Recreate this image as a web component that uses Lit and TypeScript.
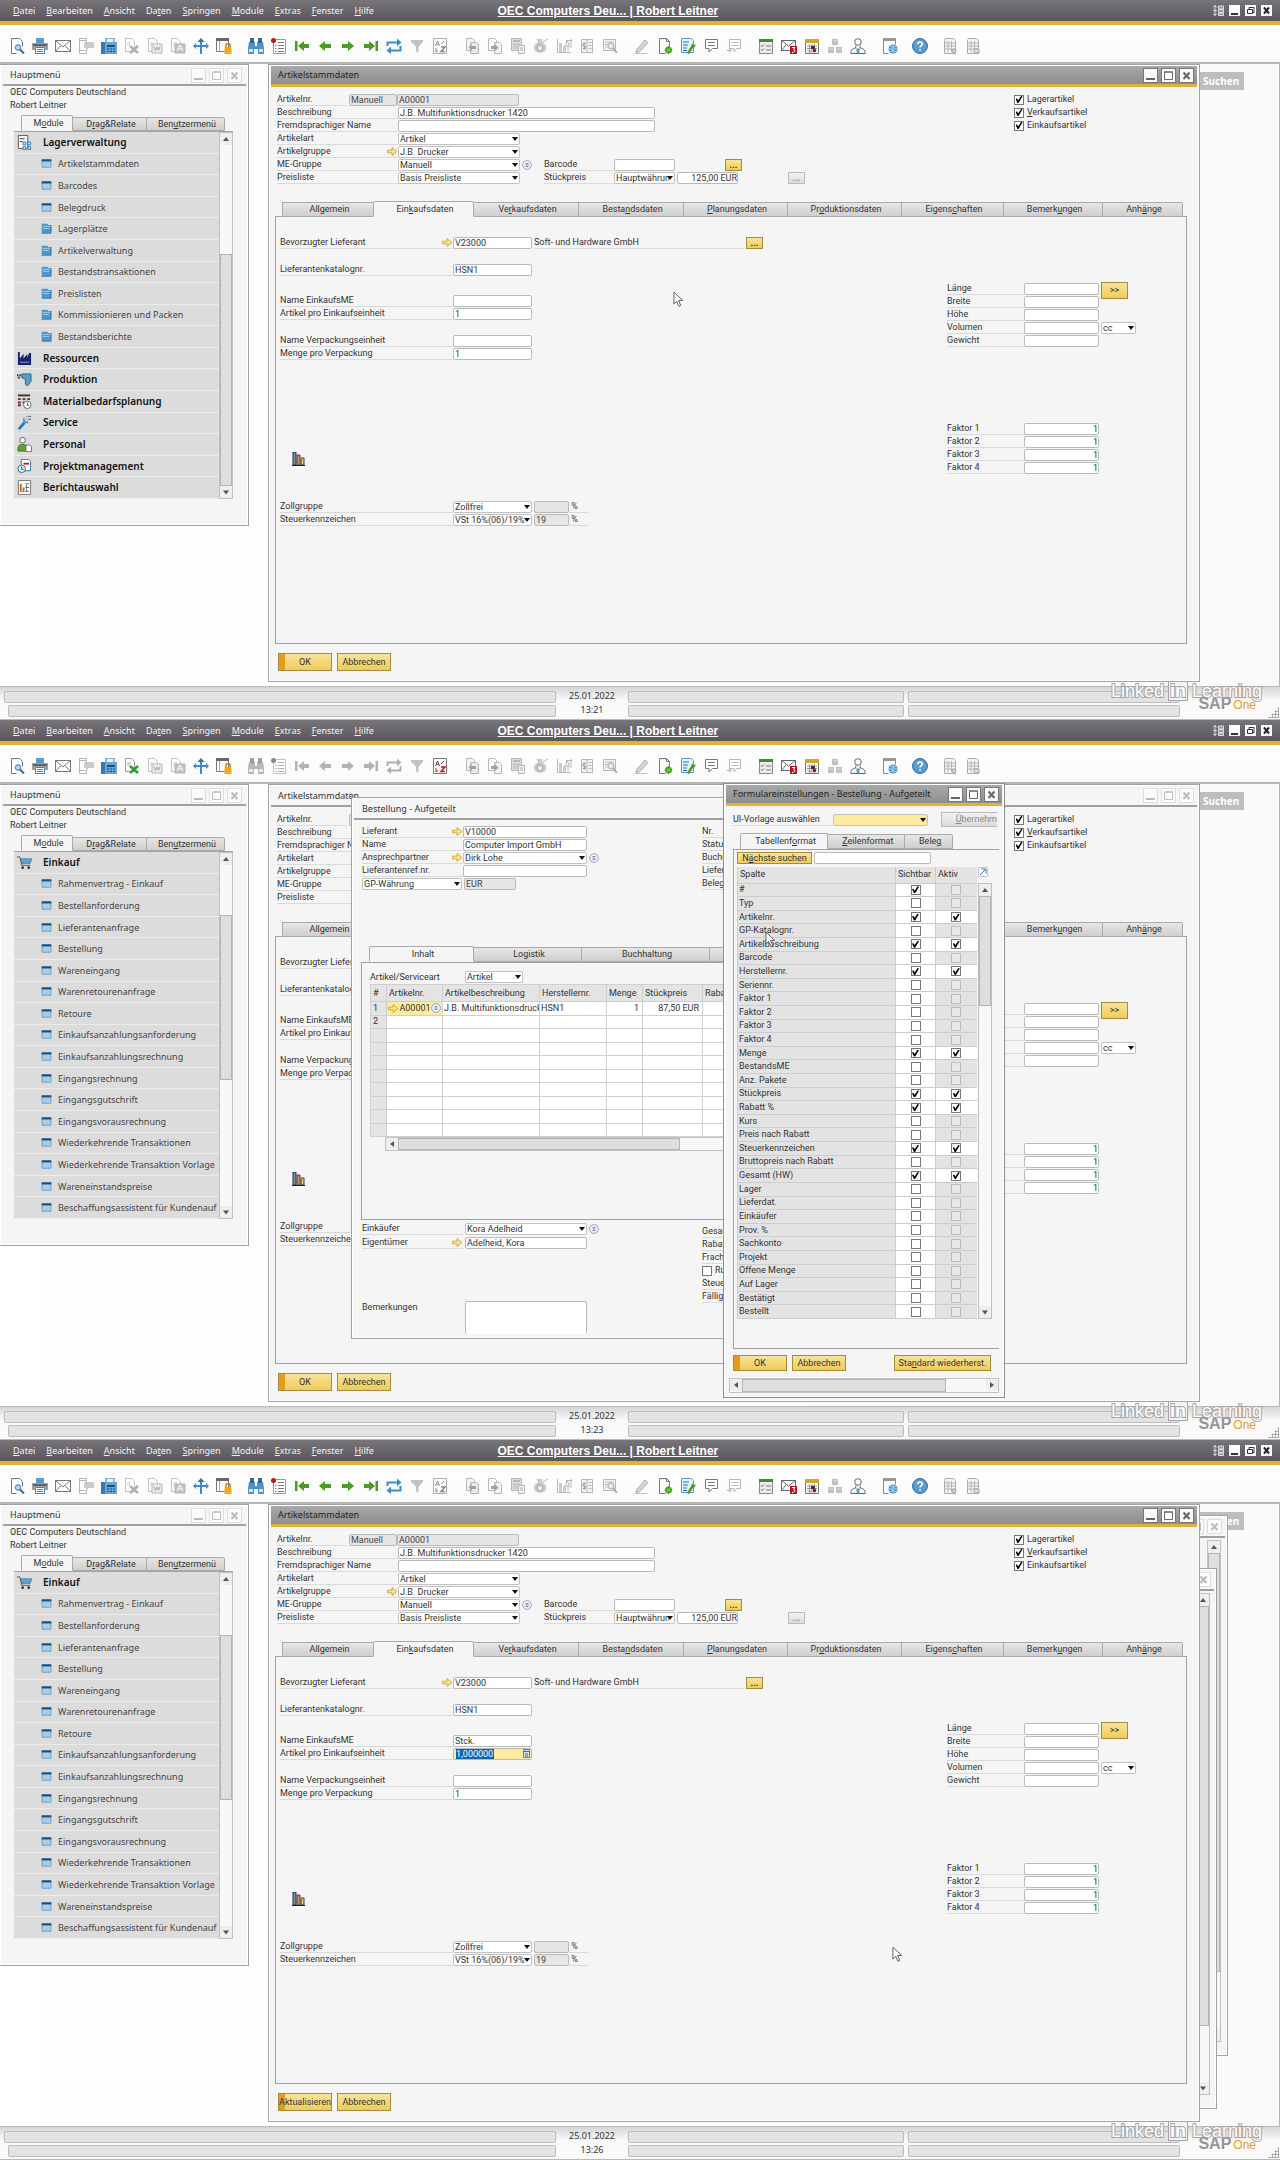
import { LitElement, html, svg, css, nothing, TemplateResult } from "lit";
import { customElement, property } from "lit/decorators.js";
import { classMap } from "lit/directives/class-map.js";

/* ---------- helpers ---------- */

/** Renders a caption; the letter after "_" is its underlined access key. */
const cap = (text: string) => {
  const i = text.indexOf("_");
  return i < 0 ? html`${text}` : html`${text.slice(0, i)}<u>${text[i + 1]}</u>${text.slice(i + 2)}`;
};

const icon = (body: TemplateResult, cls = "", box = 16) =>
  html`<svg class="ico ${cls}" viewBox="0 0 ${box} ${box}" aria-hidden="true">${body}</svg>`;

const pageOffice = svg`<path d="M1.5.5h6l3 3v10h-9z" fill="#fff" stroke="#999"/><path d="M3 5h4M3 7h3" stroke="#aaa"/>`;

/* ---------- toolbar glyphs ---------- */

const glyphs: Record<string, TemplateResult> = {
  preview: svg`<path d="M2.5 15.5v-15h8l3 3v5" fill="none" stroke="#777"/><path d="M2.5 15.5h5" stroke="#777"/><circle cx="9" cy="9.500" r="2.700" fill="#bcd8ee" stroke="#3a78ab"/><path d="M11 11.500l4 4" stroke="#2f6a9c" stroke-width="2"/>`,
  print: svg`<path d="M4 0h8v5H4z" fill="#5b9bc9"/><path d="M0 5h16v7H0z" fill="#9aa3aa"/><path d="M1 6h14v2H1z" fill="#5d666d"/><path d="M3.500 9.500h9v6h-9z" fill="#fff" stroke="#4a86b5"/><path d="M5 11.500h6M5 13.500h6" stroke="#4a86b5"/>`,
  mail: svg`<path d="M.5 2.500h15v11H.5z" fill="#fff" stroke="#777"/><path d="M.5 2.500L8 9l7.500-6.500M.5 13.500l5.500-6M15.500 13.500L10 7.500" fill="none" stroke="#777"/>`,
  sms: svg`<path d="M1.500.5h7v15h-7z" fill="#fff" stroke="#888"/><path d="M1.500 2.500h7M1.500 12.500h7" stroke="#888"/><path d="M6 4h10v6h-5l-3 3v-3H6z" fill="#aaa"/>`,
  fax: svg`<path d="M5 0h8v5H5z" fill="#e8f1f8" stroke="#3a78ab"/><path d="M0 4h4v12H0z" fill="#3a78ab"/><path d="M4 4h12v12H4z" fill="#69a5d0"/><path d="M6 7h8v2H6zM6 10.500h2v1H6zM9 10.500h2v1H9zM12 10.500h2v1h-2zM6 13h2v1H6zM9 13h2v1H9zM12 13h2v1h-2z" fill="#1e4f7a"/>`,
  excel: svg`${pageOffice}<path d="M6 8l8 7M14 8l-8 7" stroke="#2e9a3c" stroke-width="2.500"/>`,
  word: svg`${pageOffice}<path d="M5 6h10v9H5z" fill="#e2e2e2" stroke="#888"/><path d="M7 8.500l1.500 4L10 9l1.500 3.500 1.500-4" fill="none" stroke="#666"/>`,
  pdf: svg`${pageOffice}<path d="M5 6h10v9H5z" fill="#999" stroke="#888"/><path d="M7 13l3-6 3 6M8 11h4" fill="none" stroke="#fff"/>`,
  move: svg`<path d="M7 3h2v4h4V5l3 3-3 3V9H9v7H7V9H3v2L0 8l3-3v2h4z" fill="#3f8cc6"/><path d="M8 0l3.500 4h-7z" fill="#2a72ab"/>`,
  lock: svg`<path d="M.5.5h12v13H.5z" fill="#fff" stroke="#777"/><path d="M0 0h13v3H0z" fill="#666"/><path d="M3.500 3v10" stroke="#aaa"/><path d="M10 9V7.500a2 2 0 0 1 4 0V9" fill="none" stroke="#b88a1a" stroke-width="1.500"/><path d="M8.500 9h7v7h-7z" fill="#f2a81d"/>`,
  find: svg`<path d="M2 0h4v4H2zM10 0h4v4h-4z" fill="#2d6fa5"/><path d="M1 4h6v4h2V4h6l1 6v6h-6v-5H6v5H0v-6z" fill="#4f93c7"/><path d="M1 11h4v3H1zM11 11h4v3h-4z" fill="#cfe3f2"/><path d="M2 4h4M10 4h4" stroke="#153f66"/>`,
  form: svg`<path d="M2.500 1.500h12v14h-12z" fill="#fff" stroke="#999"/><path d="M7 4.500h6M7 7.500h6M7 10.500h6M7 13.500h6M4 7.500h1.500M4 10.500h1.500M4 13.500h1.500" stroke="#777"/><circle cx="2.500" cy="2.500" r="2.500" fill="#c01522"/>`,
  first: svg`<path d="M1 3h2.500v10H1zM4 8l6-5v3h5v4h-5v3z" fill="#4a9e1f"/>`,
  prev: svg`<path d="M2 8l6-5v3h6v4H8v3z" fill="#4a9e1f"/>`,
  next: svg`<path d="M14 8L8 3v3H2v4h6v3z" fill="#4a9e1f"/>`,
  last: svg`<path d="M15 3h-2.500v10H15zM12 8L6 3v3H1v4h5v3z" fill="#4a9e1f"/>`,
  refresh: svg`<path d="M1.500 8V4.500h10M14.500 8v4.500h-10" fill="none" stroke="#3f8cc6" stroke-width="2"/><path d="M11 .5l4.500 4-4.500 4zM5 8.500L.5 12.500l4.500 3.500z" fill="#3f8cc6"/>`,
  filter: svg`<path d="M2 2h12v2l-4.500 4.500V15L7 13V8.500L2 4z" fill="#999"/>`,
  sort: svg`<path d="M1.500.5h13v15h-13z" fill="#fff" stroke="#777"/><path d="M3.500 8L5.500 3l2 5M4.500 6.500h2" fill="none" stroke="#444"/><path d="M9 9h4l-4 4.500h4" fill="none" stroke="#c01522" stroke-width="1.500"/><path d="M4 10v4l2-1.500M9 6l3-3" stroke="#c01522" fill="none"/>`,
  base: svg`<path d="M2.500.5h6l2 2v10h-8z" fill="#eee" stroke="#888"/><path d="M6.500 4.500h6l2 2v9h-8z" fill="#ddd" stroke="#888"/><path d="M12 8H8V6L4.500 9.500 8 13v-2h4z" fill="#666"/>`,
  target: svg`<path d="M1.500.5h6l2 2v10h-8z" fill="#fff" stroke="#888"/><path d="M7.500 4.500h5l2 2v9h-7z" fill="#eee" stroke="#888"/><path d="M4 8h4V6l3.500 3.500L8 13v-2H4z" fill="#666"/>`,
  profit: svg`<path d="M1.500.5h10v12h-10z" fill="#ccc" stroke="#888"/><path d="M3 2h7v2H3z" fill="#888"/><path d="M3 6h7M3 8h7M3 10h5" stroke="#888"/><path d="M8.500 7.500h6v8h-6z" fill="#eee" stroke="#888"/><path d="M10 10h3M10 12h3" stroke="#777"/>`,
  pay: svg`<path d="M5 4L3 1h7L9 4c4 2 5 5 4 8-1 3-9 4-11 1S1 6 5 4z" fill="#aaa"/><circle cx="7" cy="10" r="3" fill="#ddd" stroke="#666"/><path d="M10 4l5-3" stroke="#888"/>`,
  gross: svg`<path d="M1.500 1v13.500H15" fill="none" stroke="#888"/><path d="M3 5h3v9H3zM7 8h3v6H7z" fill="#aaa"/><path d="M10 2.500h6M11 2l-1.500 6h4zM12 8v5M15 1v9" stroke="#888" fill="none"/>`,
  journal: svg`<path d="M2.500 1.500h11v13h-11z" fill="#eee" stroke="#888"/><path d="M8 1v14M9.500 4.500h3M9.500 7.500h3M9.500 10.500h3" stroke="#888"/><path d="M6.500 5.500H4v2.500h2.500v2.500H4M5.200 4v8" fill="none" stroke="#666"/>`,
  lookup: svg`<path d="M1.500 1.500h12v11h-12z" fill="#eee" stroke="#888"/><path d="M3 4h9M3 6.500h4M3 9h3" stroke="#888"/><circle cx="9" cy="8" r="3" fill="#ddd" stroke="#777"/><path d="M11 10l4 5" stroke="#777" stroke-width="2"/>`,
  edit: svg`<path d="M3 11l8-9 3 2.500-8 9-4 1z" fill="#bbb" stroke="#777"/><path d="M1 15.500h13" stroke="#999"/>`,
  layout: svg`<path d="M2.500 15.500v-15h7l3 3v5M2.500 15.500h6" fill="none" stroke="#777"/><path d="M9.500.5v3h3" fill="none" stroke="#777"/><circle cx="11.500" cy="12" r="2.500" fill="#fff" stroke="#53a31e" stroke-width="2"/><path d="M11.500 8v8M7.500 12h8" stroke="#53a31e"/>`,
  settings: svg`<path d="M1.500.5h10l2 2v12h-12z" fill="#e9f3fa" stroke="#5b9bc9"/><path d="M3 4h6M3 7h5M3 10h4M3 12.500h4" stroke="#2d6fa5"/><path d="M8 15.500l5-8" stroke="#4a9e1f" stroke-width="2.500"/><path d="M11 8.500l1-3 2 1.500 2-.500-1.500 3z" fill="#4a9e1f"/>`,
  chat: svg`<path d="M2.500 1.500h12v9h-5L6 14v-3.500H2.500z" fill="#fff" stroke="#777"/><path d="M5 4.500h7M5 7.500h7" stroke="#777"/>`,
  reply: svg`<path d="M3.500 1.500h11v9h-4L8 14v-3.500H3.500z" fill="#fff" stroke="#888"/><path d="M5.500 4.500h7M5.500 7.500h7" stroke="#888"/><path d="M1 12.500h4M3 10.500l2 2-2 2" stroke="#777" fill="none"/>`,
  tasks: svg`<path d="M1.500 1.500h13v14h-13z" fill="#ececec" stroke="#888"/><path d="M1 1h14v3H1z" fill="#3f8d2a"/><path d="M3 7.500l1 1 2-2M3 11.500l1 1 2-2" fill="none" stroke="#c0392b"/><path d="M8 8h5M8 12h5" stroke="#777"/>`,
  alert: svg`<path d="M.5 2.500h14v10H.5z" fill="#fff" stroke="#666"/><path d="M.5 2.500L7.500 8l7-5.500M.5 12.500L5 7" fill="none" stroke="#666"/><path d="M9 8h7v8H9z" fill="#b8121f"/><path d="M11 9.500h3l-1.500 2c2 0 2 3-1.500 3" fill="none" stroke="#fff"/>`,
  calendar: svg`<path d="M1.500 1.500h13v14h-13z" fill="#fff" stroke="#777"/><path d="M1 1h14v4H1z" fill="#d6a33a"/><path d="M3 8h10M3 10.500h10M3 13h10M5.500 6v9M8 6v9M10.500 6v9" stroke="#999"/><path d="M7 8h4v3H7z" fill="#333"/><path d="M9 11h3v3H9z" fill="#b8121f"/>`,
  org: svg`<path d="M5 1h6v6H5zM1 9h6v6H1zM9 9h6v6H9z" fill="#999"/><path d="M6 3h4M2 11h4M10 11h4" stroke="#ccc"/>`,
  person: svg`<circle cx="8" cy="4" r="3.300" fill="#fff" stroke="#666"/><path d="M.8 15.500c0-4 2-5 5-5.500V7.500M15.200 15.500c0-4-2-5-5-5.500V7.500M.8 15.500h14.400" fill="none" stroke="#666"/><path d="M6 10.500h4L9 15H7z" fill="#5b9bc9"/>`,
  web: svg`<path d="M1.500 15.500v-15h12v6M1.500 15.500h5" fill="none" stroke="#888"/><path d="M1 0h13v3H1z" fill="#999"/><circle cx="11" cy="11" r="4.500" fill="#4b93c9"/><path d="M6.500 11h9M11 6.500v9M8 8c2 1.500 4 1.500 6 0M8 14c2-1.500 4-1.500 6 0" stroke="#d8eaf6" fill="none" stroke-width=".7"/>`,
  help: svg`<circle cx="8" cy="8" r="7.500" fill="#5a9bd0" stroke="#3a6f9e"/><path d="M5.700 6.200c0-3 4.600-3 4.600-.3C10.300 7.700 8 7.700 8 9.600M8 11v1.700" stroke="#fff" fill="none" stroke-width="1.500"/>`,
  grid: svg`<path d="M3.500.5h8l2 2v13h-11v-13z" fill="#eee" stroke="#777"/><path d="M3 5h10M3 8h10M3 11h10M6 3v11M9.500 3v11" stroke="#888"/><circle cx="12" cy="13" r="2" fill="#bbb" stroke="#666"/>`,
  grid2: svg`<path d="M3.500.5h8l2 2v13h-11v-13z" fill="#eee" stroke="#777"/><path d="M3 5h10M3 8h10M3 11h10M6 3v11M9.500 3v11" stroke="#888"/><path d="M9 11h5v4H9z" fill="#ccc" stroke="#666"/>`,
};

const always = ["preview", "print", "mail", "fax", "move", "lock", "layout", "settings", "chat", "tasks", "alert", "calendar", "person", "web", "help"];
const browsing = ["find", "form", "first", "prev", "next", "last", "refresh"];
const ordering = ["excel", "sort"];
const toolGroups = [
  ["preview", "print", "mail", "sms", "fax", "excel", "word", "pdf", "move", "lock"],
  ["find", "form", "first", "prev", "next", "last", "refresh", "filter", "sort"],
  ["base", "target", "profit", "pay", "gross", "journal", "lookup"],
  ["edit", "layout", "settings", "chat", "reply"],
  ["tasks", "alert", "calendar", "org", "person"],
];
const toolTail = [["web"], ["help"], ["grid", "grid2"]];

/* ---------- main menu glyphs ---------- */

const menuGlyphs: Record<string, TemplateResult> = {
  win: svg`<path d="M1.500 2.500h13v11h-13z" fill="#a9cbe6" stroke="#4f8fc0"/><path d="M1 2h14v3H1z" fill="#16507f"/>`,
  folder: svg`<path d="M1 1h8l2 2h4v12H1z" fill="#4f96cc"/><path d="M2 5h12M3 8h9" stroke="#bfe0f5"/><path d="M14.500 3v12H1" fill="none" stroke="#2a6496"/>`,
  stock: svg`<path d="M1.500.5h10v14h-10z" fill="#f5f5f5" stroke="#555"/><path d="M3 4h5M3 7h3" stroke="#333"/><path d="M6.500 7.500h3v3h-3zM11.500 7.500h3v3h-3zM6.500 12.500h3v3h-3zM11.500 12.500h3v3h-3z" fill="#cfe6f5" stroke="#2d7ab5"/>`,
  cart: svg`<path d="M0 2h3l2 9h9" fill="none" stroke="#555"/><path d="M4 4h12l-2 5H5z" fill="#5ba3d6" stroke="#35607f" stroke-width=".6"/><circle cx="6" cy="13.500" r="1.500" fill="#333"/><circle cx="12.500" cy="13.500" r="1.500" fill="#333"/>`,
  plant: svg`<path d="M1 15V1h2v7l4-5v5l4-5v4l2-5h2v13z" fill="#15246e"/><path d="M3 12h10" stroke="#8fa3e0"/>`,
  prod: svg`<path d="M5 2h10v8l-4 5-2-2V8L5 6z" fill="#5b9bc9" stroke="#33668f"/><path d="M0 3.500h1.500M2.500 3.500H4M1 6h2" stroke="#333" stroke-width="2"/>`,
  mrp: svg`<path d="M1 1.500h13" stroke="#333" stroke-width="2"/><path d="M1 5.500h3M6 5.500h3M11 5.500h3M1 9h3M6 9h2M1 12h3" stroke="#6b2a2a" stroke-width="2"/><circle cx="11" cy="11.500" r="4" fill="#fff" stroke="#666"/><path d="M11 9v3h2" fill="none" stroke="#444"/>`,
  service: svg`<path d="M2 15l6-7" stroke="#2d7ab5" stroke-width="3"/><path d="M6 4l1 4 4 1 2-2-3 0-2-2V2z" fill="#4f96cc"/><path d="M10 1.500h1M12 1.500h3M12 4.500h3M10 4.500h1" stroke="#555"/>`,
  staff: svg`<circle cx="6" cy="3.500" r="3" fill="#fff" stroke="#555"/><path d="M1 15c0-6 1-7 5-7s4 2 4 7z" fill="#5fa03a" stroke="#3c6f22"/><path d="M9.500 8.500h4l2 2v5h-6z" fill="#fff" stroke="#666"/>`,
  project: svg`<path d="M4.500.5h8l2 2v10h-10z" fill="#fff" stroke="#2d7ab5"/><circle cx="5" cy="10.500" r="4" fill="#e8f3fb" stroke="#33668f"/><path d="M5 8v3h2" stroke="#333" fill="none"/><path d="M7 5h6" stroke="#b8242a" stroke-width="2"/>`,
  report: svg`<path d="M1.500.5h13v15h-13z" fill="#fff" stroke="#777"/><path d="M4 4v9M7 8v5" stroke="#d0632a" stroke-width="2"/><path d="M10 5v8M9 4h4M9 8h4M9 12h4" stroke="#666"/>`,
};

type Entry = [glyph: string, label: string, head?: boolean];
const stockMenu: Entry[] = [
  ["stock", "Lagerverwaltung", true],
  ["win", "Artikelstammdaten"], ["win", "Barcodes"], ["win", "Belegdruck"],
  ["folder", "Lagerplätze"], ["folder", "Artikelverwaltung"], ["folder", "Bestandstransaktionen"],
  ["folder", "Preislisten"], ["folder", "Kommissionieren und Packen"], ["folder", "Bestandsberichte"],
  ["plant", "Ressourcen", true], ["prod", "Produktion", true], ["mrp", "Materialbedarfsplanung", true],
  ["service", "Service", true], ["staff", "Personal", true], ["project", "Projektmanagement", true],
  ["report", "Berichtauswahl", true],
];
const buyMenu: Entry[] = [
  ["cart", "Einkauf", true],
  ...["Rahmenvertrag - Einkauf", "Bestellanforderung", "Lieferantenanfrage", "Bestellung", "Wareneingang",
    "Warenretourenanfrage", "Retoure", "Einkaufsanzahlungsanforderung", "Einkaufsanzahlungsrechnung",
    "Eingangsrechnung", "Eingangsgutschrift", "Eingangsvorausrechnung", "Wiederkehrende Transaktionen",
    "Wiederkehrende Transaktion Vorlage", "Wareneinstandspreise",
    "Beschaffungsassistent für Kundenauf"].map((t): Entry => ["win", t]),
];

/* ---------- shared styles ---------- */

const base = css`
  :host { display: block; font: 9px/13px Roboto, "Liberation Sans", sans-serif; color: #333; }
  * { box-sizing: border-box; }
  u { text-underline-offset: 1px; }
  input, select, textarea, button { font: inherit; color: inherit; margin: 0; padding: 0; border-radius: 0; min-width: 0; }
  button { cursor: default; white-space: nowrap; }
  .ico { display: block; width: 16px; height: 16px; flex: none; }
  .off { filter: grayscale(1) opacity(0.6); }

  .win { border: 1px solid #a2a2a2; background: #f5f5f5; padding: 1px; display: flex; flex-direction: column; min-width: 0; box-shadow: inset 0 0 0 1px #fff; }
  .title { display: flex; align-items: center; height: 21px; flex: none; gap: 3px; padding: 0 3px 0 7px; margin: 0 1px; font: 9px/18px "Noto Sans", sans-serif; color: #333; border-bottom: 2px solid #a0a0a0; }
  .title h2 { font: inherit; margin: 0; flex: 1; white-space: nowrap; }
  .active > .title { background: linear-gradient(#a8a8a8, #8e8e8e); border-bottom: 3px solid #e0b23b; color: #222; }
  .box { width: 15px; height: 15px; background: #fbfbfb; border: 1px solid #ddd; color: #bbb; display: grid; place-items: center; flex: none; }
  .active > .title .box { border-color: #777; color: #666; }
  .box svg { width: 11px; height: 11px; display: block; }

  .tabs { display: flex; align-items: flex-end; position: relative; z-index: 1; margin-bottom: -1px; }
  .tab { height: 15px; border: 1px solid #aaa; border-right-width: 0; background: linear-gradient(#e6e6e6, #cfcfcf); text-align: center; overflow: hidden; line-height: 13px; padding-left: 3px; }
  .tab:last-child { border-right-width: 1px; border-top-right-radius: 2px; }
  .tab.on { background: #f5f5f5; border-right-width: 1px; border-bottom-color: #f5f5f5; border-radius: 2px 2px 0 0; height: 16px; }
  .tab.on + .tab { border-left-width: 0; }
  .sheet { border: 1px solid #a2a2a2; }

  .vbar { width: 14px; border: 1px solid #c0c0c0; background: #f8f8f8; display: flex; flex-direction: column; flex: none; }
  .hbar { height: 14px; border: 1px solid #c4c4c4; background: #f8f8f8; display: flex; flex: none; }
  .arrow { width: 12px; height: 12px; flex: none; display: block; background: #eee; }
  .thumb { background: #dedede; border: 1px solid #b4b4b4; display: grid; place-items: center; min-width: 0; }
  .grip { width: 5px; height: 5px; background: radial-gradient(#aaa 40%, transparent 50%) 0 0 / 2px 2px; }

  .gold { border: 1px solid #a58b3c; background: linear-gradient(#f7e39b, #efcb58); text-align: center; height: 12px; line-height: 9px; }
  .cmd { height: 18px; width: 54px; line-height: 16px; }
  .cmd.main { background: linear-gradient(90deg, #e79a1b 6px, transparent 6px), linear-gradient(#f7e39b, #efcb58); }
`;

const arrow = (d: string) => html`<svg class="arrow" viewBox="0 0 12 12" aria-hidden="true"><path d=${d} fill="#555"/></svg>`;
const UP = "M3 8l3-4 3 4z", DOWN = "M3 4.500l3 4 3-4z", LEFT = "M8 3L4 6l4 3z", RIGHT = "M4 3l4 3-4 3z";

const bar = (dir: "v" | "h", a: number, b: number, c: number) => html`
  <div class="${dir}bar">
    ${arrow(dir === "v" ? UP : LEFT)}
    <span style="flex:${a} 1 0"></span>
    <span class="thumb" style="flex:${b} 1 0"><i class="grip"></i></span>
    <span style="flex:${c} 1 0"></span>
    ${arrow(dir === "v" ? DOWN : RIGHT)}
  </div>`;

const boxes = html`
  <button class="box" aria-label="Minimieren"><svg viewBox="0 0 11 11"><path d="M1 9h9" stroke="currentColor" stroke-width="2"/></svg></button>
  <button class="box" aria-label="Maximieren"><svg viewBox="0 0 11 11"><path d="M1.500 2h8v7.500h-8zM1 2h9" fill="none" stroke="currentColor"/></svg></button>
  <button class="box" aria-label="Schließen"><svg viewBox="0 0 11 11"><path d="M2.500 2.500l6 6.500M8.500 2.500l-6 6.500" stroke="currentColor" stroke-width="2"/></svg></button>`;

const tabs = (items: [string, number][], on: number) => html`
  <div class="tabs" role="tablist">
    ${items.map(([t, w], i) => html`<button role="tab" class=${classMap({ tab: true, on: i === on })} aria-selected=${i === on} style="flex:${w} 1 ${w}px">${cap(t)}</button>`)}
  </div>`;

/* ---------- toolbar ---------- */

@customElement("erp-toolbar")
export class ErpToolbar extends LitElement {
  @property() mode = "browse";
  static styles = [base, css`
    .bar { display: flex; align-items: center; gap: 16px; height: 38px; padding: 4px 9px 0; background: linear-gradient(#fff, #fafafa); }
    .group { display: flex; gap: 7px; }
    .tail { display: flex; gap: 14px; }
    .tool { border: 0; background: none; display: block; width: 16px; height: 16px; }
  `];
  private group(names: string[]) {
    const live = [...always, ...(this.mode === "order" ? ordering : browsing)];
    return html`<div class="group">${names.map(n => html`
      <button class="tool" aria-label=${n}>${icon(glyphs[n], live.includes(n) ? "" : "off")}</button>`)}</div>`;
  }
  render() {
    return html`<div class="bar" role="toolbar">
      ${toolGroups.map(g => this.group(g))}
      <div class="tail">${toolTail.map(g => this.group(g))}</div>
    </div>`;
  }
}

/* ---------- main menu ---------- */

@customElement("erp-menu")
export class ErpMenu extends LitElement {
  @property() area = "stock";
  static styles = [base, css`
    .win { padding-bottom: 26px; border-left: 0; padding-left: 2px; }
    .title { height: 20px; padding-right: 4px; }
    .who { margin: 0; padding: 0 8px; }
    .tabs { margin: 3px 22px 0 19px; }
    .tab { height: 14px; line-height: 12px; }
    .tab.on { height: 16px; }
    .body { display: flex; margin: 0 14px 0 12px; height: 368px; border-top: 1px solid #a2a2a2; }
    .list { flex: 1; min-width: 0; display: grid; grid-auto-rows: 1fr; margin: 0; padding: 0; list-style: none; background: #dcdcdc; font: 9px/13px "Noto Sans", sans-serif; }
    .item { display: flex; align-items: center; border-bottom: 1px solid #ececec; overflow: hidden; }
    .link { display: flex; align-items: center; gap: 6px; padding-left: 27px; color: #444; text-decoration: none; white-space: nowrap; }
    .link .ico { width: 11px; height: 11px; }
    .head .link { gap: 11px; padding-left: 3px; font-weight: 600; font-size: 10px; color: #111; }
    .head .ico { width: 15px; height: 15px; }
  `];
  render() {
    const stock = this.area === "stock";
    return html`<div class="win">
      <div class="title"><h2>Hauptmenü</h2>${boxes}</div>
      <p class="who">OEC Computers Deutschland</p>
      <p class="who">Robert Leitner</p>
      ${tabs([["M_odule", 52], ["D_rag&Relate", 73], ["Ben_utzermenü", 79]], 0)}
      <div class="body">
        <ul class="list">${(stock ? stockMenu : buyMenu).map(([g, t, head]) => html`
          <li class=${classMap({ item: true, head: !!head })}><a class="link" href="#">${icon(menuGlyphs[g])}<span>${t}</span></a></li>`)}</ul>
        ${stock ? bar("v", 110, 232, 0) : bar("v", 50, 163, 126)}
      </div>
    </div>`;
  }
}

/* ---------- one client screen ---------- */

const formColumns: [string, boolean][] = [
  ["#", true], ["Typ", false], ["Artikelnr.", true], ["GP-Katalognr.", false], ["Artikelbeschreibung", true],
  ["Barcode", false], ["Herstellernr.", true], ["Seriennr.", false], ["Faktor 1", false], ["Faktor 2", false],
  ["Faktor 3", false], ["Faktor 4", false], ["Menge", true], ["BestandsME", false], ["Anz. Pakete", false],
  ["Stückpreis", true], ["Rabatt %", true], ["Kurs", false], ["Preis nach Rabatt", false],
  ["Steuerkennzeichen", true], ["Bruttopreis nach Rabatt", false], ["Gesamt (HW)", true], ["Lager", false],
  ["Lieferdat.", false], ["Einkäufer", false], ["Prov. %", false], ["Sachkonto", false], ["Projekt", false],
  ["Offene Menge", false], ["Auf Lager", false], ["Bestätigt", false], ["Bestellt", false],
];

const linkArrow = html`<svg class="golden" viewBox="0 0 12 10" aria-hidden="true"><path d="M.5 3.500h5v-3l5.500 4.500-5.500 4.500v-3h-5z" fill="#fbe57a" stroke="#c9a43a"/></svg>`;
const info = html`<svg class="info" viewBox="0 0 10 10" aria-hidden="true"><circle cx="5" cy="5" r="4.400" fill="#eef" stroke="#9aa6c4"/><path d="M3.500 3.500h3M3.500 5h3M3.500 6.500h3" stroke="#8490b4"/></svg>`;
const pointer = html`<svg viewBox="0 0 12 18"><path d="M1 1v13l3-3 2.500 5.500 2-1L6 10h4.500z" fill="#fff" stroke="#555"/></svg>`;

@customElement("erp-screen")
export class ErpScreen extends LitElement {
  @property() mode: "browse" | "order" | "update" = "browse";
  @property() time = "";

  static styles = [base, css`
    .screen { display: flex; flex-direction: column; min-height: 720px; background: #fbfbfb; position: relative; overflow: hidden; }

    .menubar { height: 25px; display: flex; align-items: center; background: linear-gradient(#77757a, #59575b); border-bottom: 4px solid #e0b23b; color: #fff; padding: 0 8px 0 13px; font: 9px/20px "Noto Sans", sans-serif; }
    .menus { display: flex; gap: 11px; flex: 7 1 0; }
    .menus a { color: #f4f4f4; text-decoration: none; }
    .company { font: bold 12px/20px "Liberation Sans", sans-serif; margin: 0; text-decoration: underline; color: #fff; }
    .sys { flex: 8 1 0; display: flex; justify-content: flex-end; gap: 5px; align-items: center; }
    .sys svg { width: 11px; height: 11px; display: block; }

    .desk { flex: 1; position: relative; display: grid; grid-template-columns: 249px minmax(0, 1fr) 79px; align-items: start; border-top: 2px solid #b4b4b4; border-right: 1px solid #b4b4b4; background: linear-gradient(90deg, #fff, #fafafa); margin-top: -1px; padding-bottom: 4px; }
    .art { margin-left: 19px; position: relative; z-index: 2; }
    .search { justify-self: start; margin-top: 8px; padding: 0 5px 0 3px; background: #bdbdbd; color: #fff; border: 0; font: bold 10px/18px "Noto Sans", sans-serif; height: 18px; }

    .row { display: flex; align-items: center; height: 13px; }
    .lbl { flex: none; height: 13px; border-bottom: 1px solid #dadada; white-space: nowrap; display: flex; align-items: center; justify-content: space-between; line-height: 12px; }
    .golden { width: 11px; height: 9px; display: block; flex: none; }
    .info { width: 10px; height: 10px; margin-left: 2px; display: block; flex: none; }
    .fld { height: 12px; border: 1px solid #b9b9b9; border-radius: 2px; background: #fff; padding: 0 1px; line-height: 10px; flex: none; display: block; outline: 0; }
    .ro { background: #e6e6e6; color: #444; }
    .num { text-align: right; padding: 0; }
    .sel { display: grid; align-items: center; flex: none; }
    .sel > * { grid-area: 1 / 1; }
    .sel select { appearance: none; width: 100%; height: 12px; border: 1px solid #c2c2c2; border-radius: 2px; background: #fff; padding: 0 5px 0 1px; line-height: 10px; text-overflow: clip; }
    .sel::after { content: ""; grid-area: 1 / 1; justify-self: end; margin-right: 2px; border: solid transparent; border-width: 4px 3px 0; border-top-color: #111; pointer-events: none; }
    .dots { width: 17px; font-weight: bold; line-height: 8px; flex: none; }
    .plain { background: linear-gradient(#f2f2f2, #dcdcdc); border-color: #bbb; color: #888; }

    .w20 { width: 20px; } .w35 { width: 35px; } .w48 { width: 48px; } .w52 { width: 52px; }
    .w58 { width: 58px; } .w61 { width: 61px; } .w70 { width: 70px; } .w75 { width: 75px; } .w77 { width: 77px; }
    .w79 { width: 79px; } .w95 { width: 95px; } .w100 { width: 100px; } .w101 { width: 101px; } .w121 { width: 121px; }
    .w122 { width: 122px; } .w124 { width: 124px; } .w173 { width: 173px; } .w210 { width: 210px; } .w257 { width: 257px; }
    .ml2 { margin-left: 2px; } .ml12 { margin-left: 12px; } .ml50 { margin-left: 50px; }

    .head { display: flex; justify-content: space-between; padding: 6px 0 17px 7px; }
    .checks { width: 184px; }
    .chk { display: flex; align-items: center; gap: 3px; height: 13px; white-space: nowrap; }
    input[type="checkbox"] { appearance: none; width: 10px; height: 10px; border: 1px solid #777; background: #fff; display: grid; place-items: center; flex: none; }
    input[type="checkbox"]:checked::before { content: ""; width: 7px; height: 7px; background: #000; clip-path: polygon(0 40%, 20% 35%, 38% 62%, 80% 0, 100% 5%, 45% 100%, 28% 100%); }
    input[type="checkbox"]:disabled:not(:checked) { background: #e8e8e8; border-color: #bbb; }

    .art .tabs { margin-left: 12px; margin-right: 15px; }
    .art .sheet { margin: 0 11px 0 5px; min-height: 428px; display: flex; justify-content: space-between; padding: 19px 50px 0 4px; }
    .stack { display: flex; flex-direction: column; }
    .g14 { margin-top: 14px; } .g18 { margin-top: 18px; }
    .chart { width: 13px; height: 14px; margin: 92px 0 34px 12px; display: block; }
    .dims { margin-top: 46px; width: 189px; }
    .factors { margin-top: 75px; }
    .go { width: 27px; height: 17px; line-height: 15px; margin: 3px 0 0 2px; flex: none; }
    .cmds { display: flex; gap: 5px; padding: 9px 8px 9px; }
    .hot { background: #fdeca0; display: flex; align-items: center; justify-content: space-between; padding: 0 1px 0 2px; }
    .hot input { border: 0; background: #0a64b4; color: #fff; width: 38px; height: 10px; line-height: 10px; padding: 0; outline: 0; }
    .hot svg { width: 7px; height: 9px; }

    .po { position: absolute; z-index: 3; left: 351px; top: 13px; width: 640px; padding-bottom: 4px; }
    .po .title { padding-left: 8px; }
    .pohead { display: flex; padding: 5px 0 56px 9px; }
    .pol { width: 340px; flex: none; }
    .po .tabs { margin: 0 40px 0 16px; }
    .po .sheet { margin: 0 9px 0 8px; height: 258px; padding: 7px 0 0 8px; border-right: 0; overflow: hidden; }
    .svc { height: 14px; }
    .lines { border-collapse: collapse; table-layout: fixed; width: 380px; height: 153px; background: #fff; }
    .lines th, .lines td { border: 1px solid #cfcfcf; padding: 0 1px; font-weight: normal; text-align: left; line-height: 11px; white-space: nowrap; overflow: hidden; }
    .lines thead th { background: #e4e4e4; padding-left: 2px; height: 17px; }
    .lines tbody tr { height: 13px; }
    .lines tbody th { background: #e4e4e4; padding-left: 2px; }
    .lines .r { text-align: right; padding-right: 3px; }
    .cell { display: flex; align-items: center; justify-content: space-between; height: 11px; }
    .cell .info { margin-left: 0; }
    .lines .pick { background: #fdeca0; padding: 0 1px; }
    .po .hbar { margin-left: 15px; width: 380px; }
    .foot { display: flex; padding: 2px 0 0 9px; }
    .foot .row { margin-bottom: 1px; }
    .foot .por { padding-top: 3px; }
    .foot .por .row { margin: 0; }
    .note { height: 33px; border-bottom: 0; resize: none; }
    .remarks { display: flex; margin-top: 52px; }

    .fs { position: absolute; z-index: 4; left: 723px; top: -1px; width: 282px; border-color: #8f8f8f; }
    .fs .title { padding-left: 7px; }
    .fsbody { padding: 6px 4px 3px 8px; }
    .tpl { height: 15px; display: flex; align-items: center; overflow: hidden; }
    .tpl .lbl { width: 100px; }
    .tpl select { background: #fdeca0; }
    .apply { height: 15px; width: 56px; margin-left: 13px; flex: none; line-height: 13px; text-align: right; border-right: 0; }
    .fs .tabs { margin: 6px 46px 0 7px; }
    .fs .sheet { border-right: 0; height: 500px; padding: 2px 0 0 3px; }
    .findrow { display: flex; gap: 2px; margin-bottom: 3px; }
    .findrow button { width: 75px; } .findrow input { width: 117px; }
    .grid { display: flex; gap: 1px; height: 452px; }
    .cols { border-collapse: collapse; table-layout: fixed; width: 239px; height: 452px; background: #e3e3e3; }
    .cols th, .cols td { border: 1px solid #cdcdcd; border-width: 0 0 1px 1px; padding: 0 1px; font-weight: normal; text-align: left; line-height: 11px; white-space: nowrap; }
    .cols thead th { height: 16px; padding-left: 2px; }
    .cols td input { margin: 0 auto; }
    .cols .w { background: #fff; }
    .side { display: flex; flex-direction: column; }
    .side svg.exp { width: 10px; height: 10px; display: block; margin-bottom: 6px; }
    .side .vbar { flex: 1; }
    .fscmds { display: flex; gap: 5px; padding: 6px 8px 7px 0; }
    .fscmds .cmd { height: 16px; line-height: 14px; }
    .fscmds .wide { width: 97px; margin-left: auto; }
    .fs .hbar { margin-left: -4px; height: 15px; }

    .back { position: absolute; z-index: 1; width: 180px; height: 541px; }
    .back .vbar { flex: 1; align-self: flex-end; margin: 2px 5px 12px 0; }
    .b1 { right: 51px; top: 11px; }
    .b2 { right: 62px; top: 64px; }

    .status { height: 34px; border-top: 1px solid #b8b8b8; border-bottom: 1px solid #b8b8b8; background: linear-gradient(#d6d6d6, #fafafa 14px, #fafafa); display: grid; grid-template-columns: 552px 72px 276px minmax(0, 1fr); grid-auto-rows: 12px; row-gap: 2px; padding: 4px 100px 0 4px; }
    .slot { background: #e3e3e3; border: 1px solid #bcbcbc; border-radius: 2px; }
    .slot + .slot { margin-left: 4px; }
    .mid { text-align: center; font: 9px/9px "Noto Sans", sans-serif; }
    .mark { position: absolute; z-index: 6; right: 18px; bottom: 19px; display: flex; gap: 4px; align-items: center; font: 18px/20px "Liberation Sans", sans-serif; color: #fff; -webkit-text-stroke: 2px #a6a6a6; paint-order: stroke fill; }
    .mark b { font-weight: bold; border: 1px solid #a6a6a6; background: #f4f4f4; width: 20px; height: 20px; line-height: 18px; text-align: center; }
    .sap { position: absolute; z-index: 5; right: 24px; bottom: 8px; display: flex; align-items: baseline; gap: 2px; font: bold 16px/16px "Liberation Sans", sans-serif; color: #949494; }
    .sap i { font: 12px/12px "Liberation Sans", sans-serif; color: #e0a020; }
    .corner { position: absolute; right: 1px; bottom: 2px; width: 11px; height: 11px; background: radial-gradient(#999 45%, transparent 55%) 0 0 / 3px 3px; clip-path: polygon(100% 0, 100% 100%, 0 100%); }
    .mouse { position: absolute; z-index: 7; width: 11px; height: 17px; }
    .mouse svg { display: block; width: 100%; height: 100%; }
    .mouse.browse { left: 673px; top: 291px; }
    .mouse.order { left: 765px; top: 211px; }
    .mouse.update { left: 892px; top: 506px; }
  `];

  private select(id: string, w: string, value: string) {
    return html`<span class="sel ${w}"><select id=${id} aria-label=${id}><option>${value}</option></select></span>`;
  }

  private input(id: string, label: string, w: string, lw: string, value = "", link = false, num = false, ro = false) {
    return html`<label class="lbl ${lw}" for=${id}><span>${label}</span>${link ? linkArrow : nothing}</label>
      <input class=${classMap({ fld: true, [w]: true, num, ro })} id=${id} .value=${value} ?readonly=${ro}>`;
  }

  private check(id: string, label: string) {
    return html`<div class="chk"><input type="checkbox" id=${id} checked><label for=${id}>${cap(label)}</label></div>`;
  }

  private article() {
    const upd = this.mode === "update";
    return html`<section class="win art ${this.mode === "order" ? "" : "active"}">
      <div class="title"><h2>Artikelstammdaten</h2>${boxes}</div>
      <div class="head">
        <div class="stack">
          <div class="row"><label class="lbl w70" for="nr">Artikelnr.</label><input class="fld ro w48 ml2" aria-label="Serie" value="Manuell" readonly><input class="fld ro w122" id="nr" value="A00001" readonly></div>
          <div class="row">${this.input("desc", "Beschreibung", "w257", "w121", "J.B. Multifunktionsdrucker 1420")}</div>
          <div class="row">${this.input("foreign", "Fremdsprachiger Name", "w257", "w121")}</div>
          <div class="row"><label class="lbl w121" for="kind">Artikelart</label>${this.select("kind", "w122", "Artikel")}</div>
          <div class="row"><label class="lbl w121" for="group"><span>Artikelgruppe</span>${linkArrow}</label>${this.select("group", "w122", "J.B. Drucker")}</div>
          <div class="row"><label class="lbl w121" for="uom">ME-Gruppe</label>${this.select("uom", "w122", "Manuell")}${info}
            <span class="ml12 row">${this.input("code", "Barcode", "w61", "w70")}</span><button class="gold dots ml50" aria-label="Barcodes">...</button></div>
          <div class="row"><label class="lbl w121" for="list">Preisliste</label>${this.select("list", "w122", "Basis Preisliste")}<span class="info"></span>
            <label class="lbl w70 ml12" for="cur">Stückpreis</label>${this.select("cur", "w61", "Hauptwährun")}<input class="fld num w61 ml2" aria-label="Preis" value="125,00 EUR"><button class="gold dots plain ml50" aria-label="Preise">...</button></div>
        </div>
        <div class="checks">${this.check("c1", "Lagerartikel")}${this.check("c2", "_Verkaufsartikel")}${this.check("c3", "Einkaufsartikel")}</div>
      </div>
      ${tabs([["Allgemein", 91], ["Ein_kaufsdaten", 101], ["Ve_rkaufsdaten", 104], ["Besta_ndsdaten", 105], ["_Planungsdaten", 104], ["Pr_oduktionsdaten", 114], ["Eigens_chaften", 102], ["Bemerk_ungen", 99], ["Anh_änge", 81]], 1)}
      <div class="sheet">
        <div class="stack">
          <div class="row">${this.input("vendor", "Bevorzugter Lieferant", "w79", "w173", "V23000", true)}<span class="lbl w210 ml2">Soft- und Hardware GmbH</span><button class="gold dots ml2" aria-label="Lieferanten">...</button></div>
          <div class="row g14">${this.input("cat", "Lieferantenkatalognr.", "w79", "w173", "HSN1")}</div>
          <div class="row g18">${this.input("buyUom", "Name EinkaufsME", "w79", "w173", upd ? "Stck." : "")}</div>
          <div class="row">${upd ? html`<label class="lbl w173" for="perBuy">Artikel pro Einkaufseinheit</label><span class="fld w79 hot"><input id="perBuy" value="1,000000"><svg viewBox="0 0 7 9" aria-hidden="true"><path d="M.5.5h6v8h-6z" fill="#cfe0f2" stroke="#5b7fae"/><path d="M1 2.500h5M2 5h3M2 7h3" stroke="#3f689e"/></svg></span>`
            : this.input("perBuy", "Artikel pro Einkaufseinheit", "w79", "w173", "1")}</div>
          <div class="row g14">${this.input("packUom", "Name Verpackungseinheit", "w79", "w173")}</div>
          <div class="row">${this.input("perPack", "Menge pro Verpackung", "w79", "w173", "1")}</div>
          <svg class="chart" viewBox="0 0 13 14" aria-hidden="true"><path d="M1 0h3v13H1z" fill="#6d8fae" stroke="#333"/><path d="M5 3h3v10H5z" fill="#d98b6a" stroke="#443"/><path d="M9 6h3v7H9z" fill="#e8c45a" stroke="#443"/><path d="M0 13.500h13" stroke="#222"/></svg>
          <div class="row"><label class="lbl w173" for="duty">Zollgruppe</label>${this.select("duty", "w79", "Zollfrei")}<input class="fld ro w35 ml2" aria-label="Zollsatz" readonly><span class="lbl w20">&nbsp;%</span></div>
          <div class="row"><label class="lbl w173" for="tax">Steuerkennzeichen</label>${this.select("tax", "w79", "VSt 16%(06)/19%")}<input class="fld ro w35 ml2" aria-label="Steuersatz" value="19" readonly><span class="lbl w20">&nbsp;%</span></div>
        </div>
        <div class="dims">
          <div class="row">${this.input("d0", "Länge", "w75", "w77")}<button class="gold go">&gt;&gt;</button></div>
          <div class="row">${this.input("d1", "Breite", "w75", "w77")}</div>
          <div class="row">${this.input("d2", "Höhe", "w75", "w77")}</div>
          <div class="row">${this.input("d3", "Volumen", "w75", "w77")}<span class="ml2">${this.select("unit", "w35", "cc")}</span></div>
          <div class="row">${this.input("d4", "Gewicht", "w75", "w77")}</div>
          <div class="factors">${[1, 2, 3, 4].map(n => html`<div class="row">${this.input("f" + n, "Faktor " + n, "w75", "w77", "1", false, true)}</div>`)}</div>
        </div>
      </div>
      <div class="cmds"><button class="gold cmd main">${upd ? "Aktualisieren" : "OK"}</button><button class="gold cmd">Abbrechen</button></div>
    </section>`;
  }

  private order() {
    const blank = [2, "", "", "", "", "", "", "", ""];
    return html`<section class="win po">
      <div class="title"><h2>Bestellung - Aufgeteilt</h2></div>
      <div class="pohead">
        <div class="pol">
          <div class="row">${this.input("pv", "Lieferant", "w124", "w101", "V10000", true)}</div>
          <div class="row">${this.input("pn", "Name", "w124", "w101", "Computer Import GmbH")}</div>
          <div class="row"><label class="lbl w101" for="pc"><span>Ansprechpartner</span>${linkArrow}</label>${this.select("pc", "w124", "Dirk Lohe")}${info}</div>
          <div class="row">${this.input("pr", "Lieferantenref.nr.", "w124", "w101")}</div>
          <div class="row">${this.select("Währung", "w100", "GP-Währung")}<input class="fld ro w52 ml2" aria-label="Währungscode" value="EUR" readonly></div>
        </div>
        <div class="por">${["Nr.", "Statu", "Buchu", "Liefer", "Beleg"].map(t => html`<div class="row"><span class="lbl w100">${t}</span></div>`)}</div>
      </div>
      ${tabs([["Inhalt", 105], ["Logistik", 107], ["Buchhaltung", 128], ["", 240]], 0)}
      <div class="sheet">
        <div class="row svc"><label class="w95" for="ps">Artikel/Serviceart</label>${this.select("ps", "w58", "Artikel")}</div>
        <table class="lines">
          <colgroup>${[16, 56, 97, 67, 36, 60, 48].map(w => html`<col style="width:${w}px">`)}</colgroup>
          <thead><tr><th>#</th><th>Artikelnr.</th><th>Artikelbeschreibung</th><th>Herstellernr.</th><th>Menge</th><th>Stückpreis</th><th>Raba</th></tr></thead>
          <tbody>
            <tr><th>1</th><td class="pick"><div class="cell">${linkArrow}<span>A00001</span>${info}</div></td><td>J.B. Multifunktionsdrucke</td><td>HSN1</td><td class="r">1</td><td class="r">87,50 EUR</td><td></td></tr>
            ${blank.map(n => html`<tr><th>${n}</th><td></td><td></td><td></td><td></td><td></td><td></td></tr>`)}
          </tbody>
        </table>
        ${bar("h", 0, 282, 72)}
      </div>
      <div class="foot">
        <div class="pol">
          <div class="row"><label class="lbl w101" for="pb">Einkäufer</label><span class="ml2"></span>${this.select("pb", "w122", "Kora Adelheid")}${info}</div>
          <div class="row"><label class="lbl w101" for="po"><span>Eigentümer</span>${linkArrow}</label><span class="ml2"></span><input class="fld w122" id="po" value="Adelheid, Kora"></div>
          <div class="remarks"><label class="w101" for="pm">Bemerkungen</label><span class="ml2"></span><textarea class="fld w122 note" id="pm"></textarea></div>
        </div>
        <div class="por">
          ${["Gesar", "Rabat", "Frach"].map(t => html`<div class="row"><span class="lbl w100">${t}</span></div>`)}
          <div class="chk"><input type="checkbox" id="rd"><label for="rd">Ru</label></div>
          ${["Steue", "Fällige"].map(t => html`<div class="row"><span class="lbl w100">${t}</span></div>`)}
        </div>
      </div>
    </section>`;
  }

  private settings() {
    return html`<section class="win fs active">
      <div class="title"><h2>Formulareinstellungen - Bestellung - Aufgeteilt</h2>${boxes}</div>
      <div class="fsbody">
        <div class="tpl"><label class="lbl" for="tpl">UI-Vorlage auswählen</label>${this.select("tpl", "w95", "")}<button class="gold plain apply" disabled>${cap("_Übernehm")}</button></div>
        ${tabs([["Tabellenf_ormat", 89], ["_Zeilenformat", 77], ["Bele_g", 49]], 0)}
        <div class="sheet">
          <div class="findrow"><button class="gold">${cap("N_ächste suchen")}</button><input class="fld" aria-label="Suchbegriff"></div>
          <div class="grid">
            <table class="cols">
              <colgroup><col style="width:158px"><col style="width:40px"><col style="width:41px"></colgroup>
              <thead><tr><th>Spalte</th><th>Sichtbar</th><th>Aktiv</th></tr></thead>
              <tbody>${formColumns.map(([t, on], i) => html`<tr><td>${t}</td>
                <td class="w"><input type="checkbox" aria-label="${t} sichtbar" ?checked=${on}></td>
                <td class=${on && i ? "w" : ""}><input type="checkbox" aria-label="${t} aktiv" ?checked=${on && i > 0} ?disabled=${!on || i === 0}></td></tr>`)}</tbody>
            </table>
            <div class="side"><svg class="exp" viewBox="0 0 10 10" aria-hidden="true"><path d="M.5.5h9v9h-9z" fill="#fff" stroke="#b8c8e0"/><path d="M2 8l5.500-5.500M3.500 2h4.500v4.500" fill="none" stroke="#4a74b8"/></svg>${bar("v", 0, 108, 299)}</div>
          </div>
        </div>
        <div class="fscmds"><button class="gold cmd main">OK</button><button class="gold cmd">Abbrechen</button><button class="gold cmd wide">${cap("Sta_ndard wiederherst.")}</button></div>
        ${bar("h", 0, 204, 40)}
      </div>
    </section>`;
  }

  render() {
    return html`<div class="screen">
      <header class="menubar">
        <nav class="menus">${["_Datei", "_Bearbeiten", "_Ansicht", "Da_ten", "_Springen", "_Module", "_Extras", "_Fenster", "_Hilfe"].map(t => html`<a href="#">${cap(t)}</a>`)}</nav>
        <h1 class="company">OEC Computers Deu... | Robert Leitner</h1>
        <div class="sys">
          <svg viewBox="0 0 11 11"><path d="M2 0v11M0 2.500L2 .5l2 2M0 8.500l2 2 2-2M0 5.500h4" fill="none" stroke="#ddd"/><path d="M5.500 1h5v3h-5zM5.500 4.500h5v3h-5zM5.500 8h5v2.500h-5z" fill="#999" stroke="#ddd"/></svg>
          <svg viewBox="0 0 11 11"><path d="M0 0h11v11H0z" fill="#fff"/><path d="M2 9h7" stroke="#333" stroke-width="2"/></svg>
          <svg viewBox="0 0 11 11"><path d="M0 0h11v11H0z" fill="#fff"/><path d="M4 4V2.500h5v5H7.500M2.500 4.500h5v4h-5z" fill="none" stroke="#333"/></svg>
          <svg viewBox="0 0 11 11"><path d="M0 0h11v11H0z" fill="#fff"/><path d="M3 2.500l5 6M8 2.500l-5 6" stroke="#222" stroke-width="2"/></svg>
        </div>
      </header>
      <erp-toolbar mode=${this.mode}></erp-toolbar>
      <main class="desk">
        <erp-menu area=${this.mode === "browse" ? "stock" : "buy"}></erp-menu>
        ${this.article()}
        <button class="search">Suchen</button>
        ${this.mode === "order" ? [this.order(), this.settings()] : nothing}
        ${this.mode === "update" ? html`
          <section class="win back b1"><div class="title"><h2></h2>${boxes}</div>${bar("v", 0, 429, 59)}</section>
          <section class="win back b2"><div class="title"><h2></h2>${boxes}</div>${bar("v", 0, 430, 58)}</section>` : nothing}
      </main>
      <footer class="status">
        <span class="slot"></span><span class="mid">25.01.2022</span><span class="slot"></span><span class="slot"></span>
        <span class="slot"></span><span class="mid">${this.time}</span><span class="slot"></span><span class="slot"></span>
      </footer>
      <div class="sap">SAP<i>One</i></div>
      <div class="mark"><span>Linked</span><b>in</b><span>Learning</span></div>
      <span class="corner"></span>
      <span class="mouse ${this.mode}">${pointer}</span>
    </div>`;
  }
}

@customElement("app-root")
export class AppRoot extends LitElement {
  static styles = css`:host { display: block; background: #fff; }`;
  render() {
    return html`
      <erp-screen mode="browse" time="13:21"></erp-screen>
      <erp-screen mode="order" time="13:23"></erp-screen>
      <erp-screen mode="update" time="13:26"></erp-screen>`;
  }
}
